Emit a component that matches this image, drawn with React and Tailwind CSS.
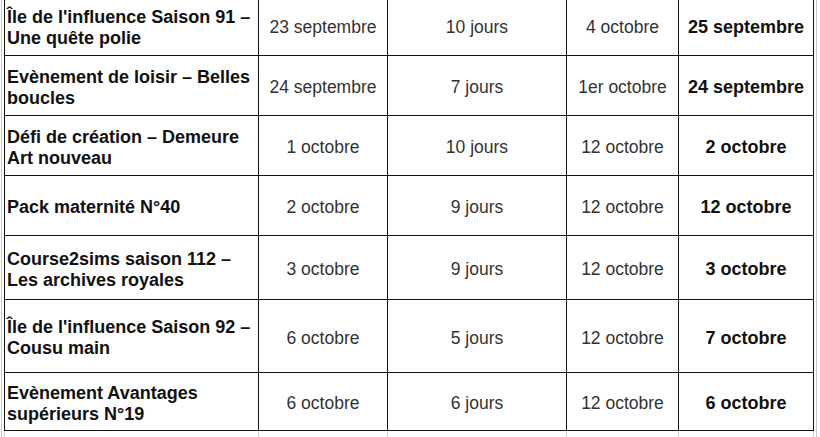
import React from "react";

const rows = [
  { name: ["Île de l'influence Saison 91 –", "Une quête polie"], start: "23 septembre", dur: "10 jours", end: "4 octobre", best: "25 septembre", h: "h-[60px]" },
  { name: ["Evènement de loisir – Belles", "boucles"], start: "24 septembre", dur: "7 jours", end: "1er octobre", best: "24 septembre", h: "h-[60px]" },
  { name: ["Défi de création – Demeure", "Art nouveau"], start: "1 octobre", dur: "10 jours", end: "12 octobre", best: "2 octobre", h: "h-[60px]" },
  { name: ["Pack maternité N°40"], start: "2 octobre", dur: "9 jours", end: "12 octobre", best: "12 octobre", h: "h-[60px]" },
  { name: ["Course2sims saison 112 –", "Les archives royales"], start: "3 octobre", dur: "9 jours", end: "12 octobre", best: "3 octobre", h: "h-[64px]" },
  { name: ["Île de l'influence Saison 92 –", "Cousu main"], start: "6 octobre", dur: "5 jours", end: "12 octobre", best: "7 octobre", h: "h-[73px]" },
  { name: ["Evènement Avantages", "supérieurs N°19"], start: "6 octobre", dur: "6 jours", end: "12 octobre", best: "6 octobre", h: "h-[58px]" },
];

const font = { fontFamily: '"Liberation Sans", Arial, sans-serif' };

function Row({ r }) {
  const cell = `border-r border-b border-[#111] flex items-center pt-[4px] ${r.h}`;
  return (
    <>
      <div className={`${cell} pl-[2px] text-[18px] font-bold text-[#111] leading-[21px] whitespace-nowrap`}>
        <div>
          {r.name.map((l, i) => (
            <div key={i}>{l}</div>
          ))}
        </div>
      </div>
      <div className={`${cell} justify-center text-[17.5px] text-[#333]`}>{r.start}</div>
      <div className={`${cell} justify-center text-[17.5px] text-[#333]`}>{r.dur}</div>
      <div className={`${cell} justify-center text-[17.5px] text-[#333]`}>{r.end}</div>
      <div className={`${cell} justify-center text-[18px] font-bold text-[#111]`}>{r.best}</div>
    </>
  );
}

export default function App() {
  return (
    <div className="w-[820px] h-[437px] overflow-hidden bg-white flex" style={font}>
      <div className="w-px shrink-0" />
      <div className="w-px shrink-0 bg-[#c9c9c9]" />
      <div className="w-[2px] shrink-0" />
      <div className="w-[810px] shrink-0 flex flex-col">
        <div className="mt-[-5px] border-l border-t border-[#111] grid grid-cols-[254px_129px_179px_112px_135px]">
          {rows.map((r, i) => (
            <Row key={i} r={r} />
          ))}
        </div>
        <div className="grid grid-cols-[254px_129px_179px_112px_135px] h-[8px] border-l border-[#d0d0d0]">
          <div className="border-r border-[#d0d0d0]" />
          <div className="border-r border-[#d0d0d0]" />
          <div className="border-r border-[#d0d0d0]" />
          <div className="border-r border-[#d0d0d0]" />
          <div className="border-r border-[#d0d0d0]" />
        </div>
      </div>
      <div className="w-[2px] shrink-0" />
      <div className="w-px shrink-0 bg-[#c9c9c9]" />
    </div>
  );
}
